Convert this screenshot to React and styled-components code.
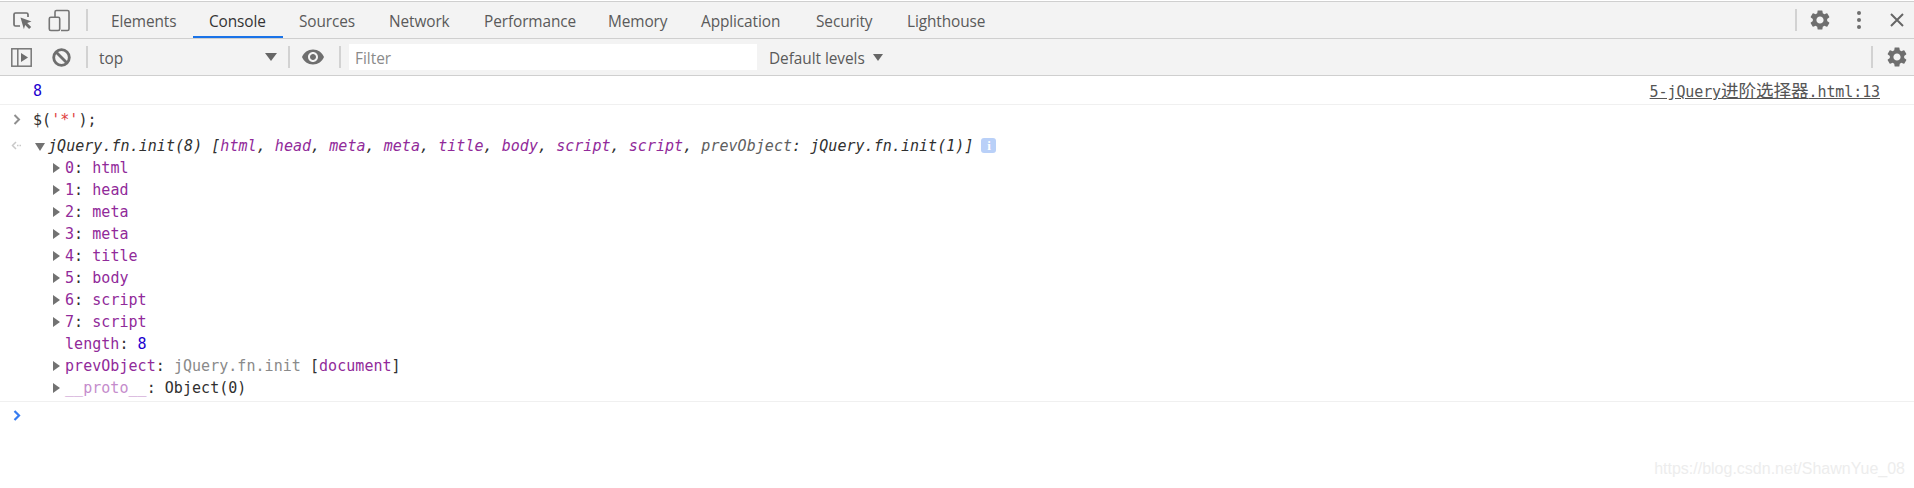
import React from "react";
import styled, { createGlobalStyle } from "styled-components";
import { MdSettings, MdVisibility } from "react-icons/md";

const Global = createGlobalStyle`
    html, body {
        margin: 0;
        background: #fff;
    }
`

const Page = styled.div`
    position: relative;
    width: 1914px;
    height: 488px;
    overflow: hidden;
    background: #fff;
    padding-top: 1px;
    box-sizing: border-box;
    font-family: "Open Sans", "Noto Sans", sans-serif;
`

const Bar = styled.div`
    display: flex;
    align-items: center;
    height: 36px;
    background: #f3f3f3;
    border-top: ${(p) => (p.$top ? "1px solid #cfcfcf" : "0")};
    border-bottom: 1px solid #cfcfcf;
    color: #5a5a5a;
`

const IconSlot = styled.span`
    display: flex;
    align-items: center;
    justify-content: center;
    flex: none;
    width: ${(p) => p.$width}px;
    margin-left: ${(p) => p.$left || 0}px;
    margin-right: ${(p) => p.$right || 0}px;
    color: #6e6e6e;
`

const Divider = styled.span`
    flex: none;
    width: 2px;
    height: 22px;
    margin-left: ${(p) => p.$left || 0}px;
    background: #d2d2d2;
`

const Tabs = styled.div`
    display: flex;
    height: 100%;
    margin-left: 7px;
`

const Tab = styled.div`
    box-sizing: border-box;
    flex: none;
    width: ${(p) => p.$width}px;
    height: 100%;
    padding: 4px 0 0 16px;
    display: flex;
    align-items: center;
    font-size: 15.4px;
    letter-spacing: -0.1px;
    color: ${(p) => (p.$active ? "#333" : "#5a5a5a")};
    border-bottom: 2px solid ${(p) => (p.$active ? "#1a73e8" : "transparent")};
`

const RightGroup = styled.div`
    display: flex;
    align-items: center;
    margin-left: auto;
`

const ContextSelect = styled.div`
    display: flex;
    align-items: center;
    justify-content: space-between;
    box-sizing: border-box;
    width: 189px;
    margin-left: 11px;
    padding-right: 11px;
`

const BarLabel = styled.span`
    margin-left: ${(p) => p.$left || 0}px;
    padding-top: 2px;
    font-size: 15.4px;
    letter-spacing: -0.05px;
`

const Caret = styled.span`
    flex: none;
    width: 0;
    height: 0;
    margin-left: ${(p) => p.$left || 0}px;
    border-left: ${(p) => p.$size}px solid transparent;
    border-right: ${(p) => p.$size}px solid transparent;
    border-top: ${(p) => p.$size + 2}px solid #666;
`

const FilterInput = styled.div`
    box-sizing: border-box;
    width: 408px;
    height: 26px;
    margin-left: 8px;
    padding: 1px 0 0 6px;
    background: #fff;
    color: #8a8a8a;
    font-size: 15.4px;
    line-height: 27px;
`

const Log = styled.div`
    font-family: "DejaVu Sans Mono", "Liberation Mono", "Noto Sans CJK SC", monospace;
    font-size: 15px;
    letter-spacing: 0.04px;
    color: #303030;
    white-space: pre;
`

const Row = styled.div`
    display: flex;
    align-items: center;
    box-sizing: border-box;
    height: ${(p) => p.$height}px;
    padding-left: ${(p) => p.$indent || 0}px;
    padding-right: 34px;
    padding-top: ${(p) => p.$top || 0}px;
    padding-bottom: ${(p) => p.$bottom || 0}px;
    border-bottom: ${(p) => (p.$line ? "1px solid #f0f0f0" : "0")};
`

const Gutter = styled.span`
    display: flex;
    align-items: center;
    justify-content: center;
    flex: none;
    width: 33px;
`

const Arrow = styled.span`
    flex: none;
    width: 0;
    height: 0;
    margin-right: 5px;
    border-top: 5px solid transparent;
    border-bottom: 5px solid transparent;
    border-left: 7px solid #727272;
`

const Spacer = styled.span`
    flex: none;
    width: 12px;
`

const DownArrow = styled.span`
    flex: none;
    width: 0;
    height: 0;
    margin: 2px 3px 0 2px;
    border-left: 5px solid transparent;
    border-right: 5px solid transparent;
    border-top: 8px solid #727272;
`

const Num = styled.span`
    color: #1c00cf;
`

const Key = styled.span`
    color: ${(p) => (p.$dim ? "#c58ccc" : "#912a9a")};
`

const Str = styled.span`
    color: #e04040;
`

const Gray = styled.span`
    color: #8a8a8a;
`

const Preview = styled.span`
    font-style: italic;
`

const GrayItalic = styled.span`
    color: #5e5e5e;
`

const InfoBadge = styled.span`
    display: inline-flex;
    align-items: center;
    justify-content: center;
    width: 15px;
    height: 15px;
    margin-left: 8px;
    border-radius: 3px;
    background: #b9d0f8;
    color: #fff;
    font-family: "Liberation Serif", serif;
    font-size: 13px;
    font-weight: bold;
`

const SourceLink = styled.span`
    margin-left: auto;
    color: #555;
    letter-spacing: -0.1px;
    text-decoration: underline;
`

const Cjk = styled.span`
    font-family: "Noto Sans CJK SC", sans-serif;
    font-size: 17.6px;
    line-height: 1;
`

const Watermark = styled.div`
    position: absolute;
    right: 9px;
    top: 460px;
    font-family: "Liberation Sans", sans-serif;
    font-size: 16px;
    color: #ededed;
`

const tabs = [
    { name: "Elements", width: 98 },
    { name: "Console", width: 90 },
    { name: "Sources", width: 90 },
    { name: "Network", width: 95 },
    { name: "Performance", width: 124 },
    { name: "Memory", width: 93 },
    { name: "Application", width: 115 },
    { name: "Security", width: 91 },
    { name: "Lighthouse", width: 100 },
];

const items = [
    ["0", "html"],
    ["1", "head"],
    ["2", "meta"],
    ["3", "meta"],
    ["4", "title"],
    ["5", "body"],
    ["6", "script"],
    ["7", "script"],
];

const InspectIcon = () => (
    <svg width="21" height="21" viewBox="0 0 21 21" fill="none">
        <path d="M8 16H3.5a1.5 1.5 0 0 1-1.5-1.5v-10A1.5 1.5 0 0 1 3.5 3h11A1.5 1.5 0 0 1 16 4.500V7" stroke="#6e6e6e" strokeWidth="1.7" />
        <path d="M8.500 7.500l11 4-4.300 1.400 4 4.100-2.100 2.100-4-4.100-1.200 4.300z" fill="#6e6e6e" />
    </svg>
);

const DeviceIcon = () => (
    <svg width="23" height="23" viewBox="0 0 23 23" fill="none" stroke="#757575" strokeWidth="1.6">
        <path d="M7 8V3a1.500 1.500 0 0 1 1.500-1.500h11A1.500 1.500 0 0 1 21 3v17a1.500 1.500 0 0 1-1.500 1.500H13" />
        <rect x="1.300" y="8.300" width="10.400" height="13.200" rx="1.500" />
    </svg>
);

const CloseIcon = () => (
    <svg width="14" height="14" viewBox="0 0 14 14" stroke="#666" strokeWidth="2">
        <path d="M1 1l12 12M13 1L1 13" />
    </svg>
);

const DotsIcon = () => (
    <svg width="6" height="20" viewBox="0 0 6 20" fill="#6e6e6e">
        <circle cx="3" cy="3" r="2" />
        <circle cx="3" cy="10" r="2" />
        <circle cx="3" cy="17" r="2" />
    </svg>
);

const SidebarIcon = () => (
    <svg width="21" height="19" viewBox="0 0 21 19" fill="none">
        <rect x="0.800" y="0.800" width="19.400" height="17.400" stroke="#777" strokeWidth="1.500" />
        <path d="M6.800 1v17" stroke="#777" strokeWidth="1.500" />
        <path d="M10 5l7 4.500-7 4.500z" fill="#6e6e6e" />
    </svg>
);

const BlockIcon = () => (
    <svg width="19" height="19" viewBox="0 0 19 19" fill="none" stroke="#6e6e6e" strokeWidth="2.800">
        <circle cx="9.500" cy="9.500" r="7.800" />
        <path d="M4 4l11 11" />
    </svg>
);

const PromptIcon = ({ color = "#8f8f8f", width = 2 }) => (
    <svg width="8" height="11" viewBox="0 0 8 11" fill="none" stroke={color} strokeWidth={width}>
        <path d="M1.500 1l4.500 4.500L1.500 10" />
    </svg>
);

const ResultIcon = () => (
    <svg width="11" height="9" viewBox="0 0 11 9" fill="none" stroke="#c9c9c9" strokeWidth="1.500">
        <path d="M5 1L1.500 4.500 5 8" />
        <path d="M6 4.500h4" strokeDasharray="1.500 1" />
    </svg>
);

const App = () => {
    return (
        <Page>
            <Global />
            <Bar $top>
                <IconSlot $width={21} $left={12}><InspectIcon /></IconSlot>
                <IconSlot $width={23} $left={15}><DeviceIcon /></IconSlot>
                <Divider $left={15} />
                <Tabs>
                    {tabs.map((tab) => (
                        <Tab key={tab.name} $width={tab.width} $active={tab.name === "Console"}>{tab.name}</Tab>
                    ))}
                </Tabs>
                <RightGroup>
                    <Divider />
                    <IconSlot $width={24} $left={11}><MdSettings size={24} /></IconSlot>
                    <IconSlot $width={6} $left={24}><DotsIcon /></IconSlot>
                    <IconSlot $width={14} $left={28} $right={10}><CloseIcon /></IconSlot>
                </RightGroup>
            </Bar>
            <Bar>
                <IconSlot $width={21} $left={11}><SidebarIcon /></IconSlot>
                <IconSlot $width={19} $left={20}><BlockIcon /></IconSlot>
                <Divider $left={15} />
                <ContextSelect>
                    <BarLabel>top</BarLabel>
                    <Caret $size={6} />
                </ContextSelect>
                <Divider />
                <IconSlot $width={24} $left={11}><MdVisibility size={24} /></IconSlot>
                <Divider $left={14} />
                <FilterInput>Filter</FilterInput>
                <BarLabel $left={12}>Default levels</BarLabel>
                <Caret $size={5} $left={8} />
                <RightGroup>
                    <Divider />
                    <IconSlot $width={24} $left={12} $right={5}><MdSettings size={24} /></IconSlot>
                </RightGroup>
            </Bar>
            <Log>
                <Row $height={29} $top={2} $line $indent={33}>
                    <Num>8</Num>
                    <SourceLink>5-jQuery<Cjk>进阶选择器</Cjk>.html:13</SourceLink>
                </Row>
                <Row $height={29}>
                    <Gutter><PromptIcon /></Gutter>
                    {"$("}<Str>{"'*'"}</Str>{");"}
                </Row>
                <Row $height={23}>
                    <Gutter><ResultIcon /></Gutter>
                    <DownArrow />
                    <Preview>
                        jQuery.fn.init(8) [
                        {items.map(([index, name]) => (
                            <React.Fragment key={index}><Key>{name}</Key>, </React.Fragment>
                        ))}
                        <GrayItalic>prevObject</GrayItalic>: jQuery.fn.init(1)]
                    </Preview>
                    <InfoBadge>i</InfoBadge>
                </Row>
                {items.map(([index, name]) => (
                    <Row key={index} $height={22} $indent={53}>
                        <Arrow />
                        <Key>{index}</Key>: <Key>{name}</Key>
                    </Row>
                ))}
                <Row $height={22} $indent={53}>
                    <Spacer />
                    <Key>length</Key>: <Num>8</Num>
                </Row>
                <Row $height={22} $indent={53}>
                    <Arrow />
                    <Key>prevObject</Key>: <Gray>jQuery.fn.init</Gray> [<Key>document</Key>]
                </Row>
                <Row $height={25} $bottom={2} $line $indent={53}>
                    <Arrow />
                    <Key $dim>__proto__</Key>: Object(0)
                </Row>
                <Row $height={26}>
                    <Gutter><PromptIcon color="#367cf1" width={2.2} /></Gutter>
                </Row>
            </Log>
            <Watermark>https://blog.csdn.net/ShawnYue_08</Watermark>
        </Page>
    )
}

export default App;
